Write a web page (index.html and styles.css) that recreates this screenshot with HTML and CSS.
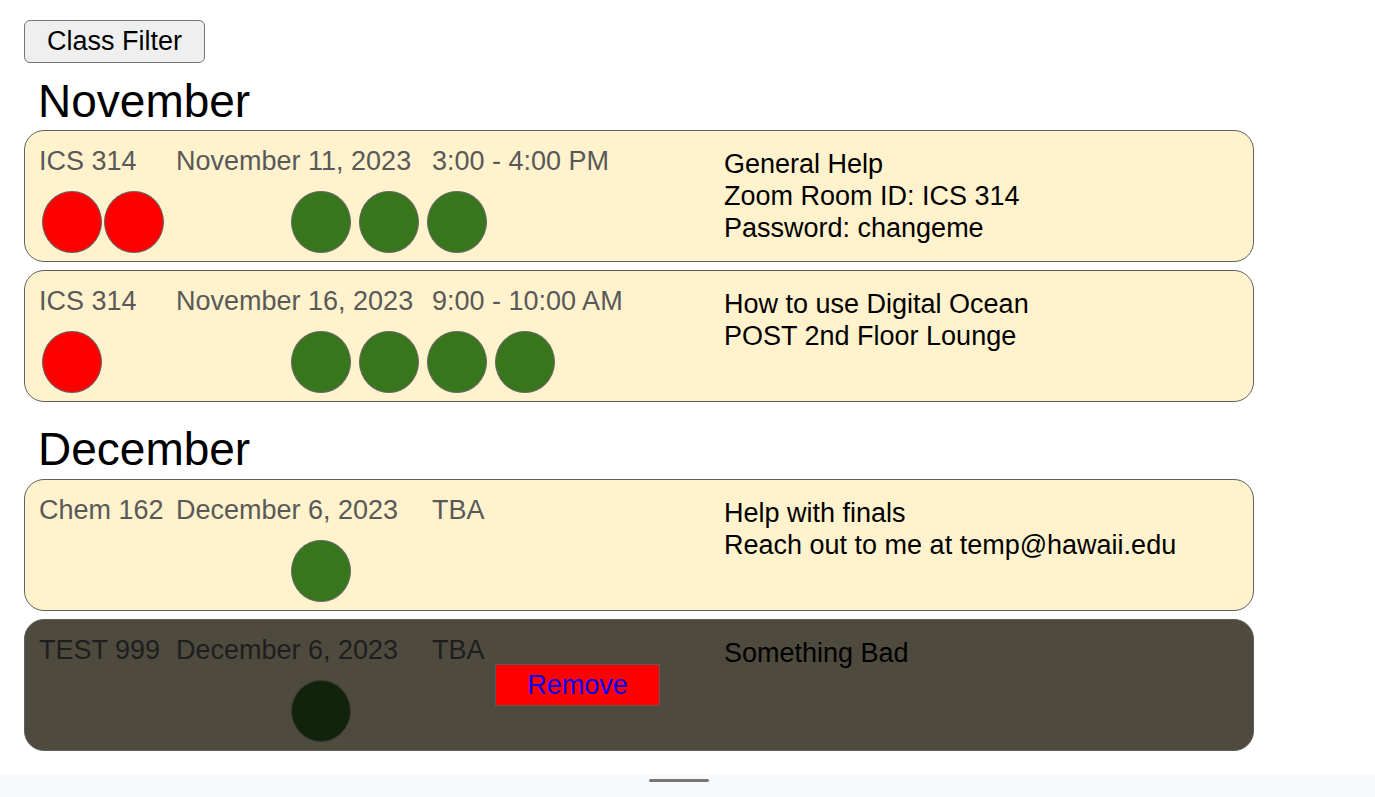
FILE: index.html
```html
<!DOCTYPE html>
<html lang="en">
<head>
<meta charset="utf-8">
<title>Office Hours</title>
<link rel="stylesheet" href="styles.css">
</head>
<body>
<main class="page">
  <button class="filter-btn" type="button">Class Filter</button>

  <section class="month">
    <h2 class="month-title">November</h2>
    <div class="card">
      <div class="course">ICS 314</div>
      <div class="date">November 11, 2023</div>
      <div class="time">3:00 - 4:00 PM</div>
      <div class="desc">General Help<br>Zoom Room ID: ICS 314<br>Password: changeme</div>
      <div class="dots">
        <div class="group red-group">
          <span class="dot red"></span><span class="dot red"></span>
        </div>
        <div class="group green-group">
          <span class="dot green"></span><span class="dot green"></span><span class="dot green"></span>
        </div>
      </div>
    </div>
    <div class="card">
      <div class="course">ICS 314</div>
      <div class="date">November 16, 2023</div>
      <div class="time">9:00 - 10:00 AM</div>
      <div class="desc">How to use Digital Ocean<br>POST 2nd Floor Lounge</div>
      <div class="dots">
        <div class="group red-group">
          <span class="dot red"></span>
        </div>
        <div class="group green-group">
          <span class="dot green"></span><span class="dot green"></span><span class="dot green"></span><span class="dot green"></span>
        </div>
      </div>
    </div>
  </section>

  <section class="month">
    <h2 class="month-title">December</h2>
    <div class="card">
      <div class="course">Chem 162</div>
      <div class="date">December 6, 2023</div>
      <div class="time">TBA</div>
      <div class="desc">Help with finals<br>Reach out to me at temp@hawaii.edu</div>
      <div class="dots">
        <div class="group red-group"></div>
        <div class="group green-group">
          <span class="dot green"></span>
        </div>
      </div>
    </div>
    <div class="card card-dim">
      <div class="course">TEST 999</div>
      <div class="date">December 6, 2023</div>
      <div class="time">TBA</div>
      <div class="desc">Something Bad</div>
      <div class="dots">
        <div class="group red-group"></div>
        <div class="group green-group">
          <span class="dot green"></span>
        </div>
        <button class="remove-btn" type="button">Remove</button>
      </div>
    </div>
  </section>
</main>
<div class="bottom-bar"><span class="handle"></span></div>
</body>
</html>
```

FILE: styles.css
```css
html, body {
  margin: 0;
  padding: 0;
  background: #ffffff;
  font-family: "Liberation Sans", Arial, sans-serif;
}

.page {
  width: 1230px;
  padding: 20px 0 0 24px;
}

.filter-btn {
  display: block;
  font-family: "Liberation Sans", Arial, sans-serif;
  font-size: 27px;
  line-height: 31px;
  color: #000;
  background: #efefef;
  border: 1px solid #767676;
  border-radius: 6px;
  padding: 5px 22px;
  margin: 0;
}

.month-title {
  margin: 12px 0 2px;
  padding-left: 14px;
  font-size: 46px;
  font-weight: normal;
  line-height: 53px;
  color: #000;
}

.month + .month .month-title {
  margin-top: 21px;
  margin-bottom: 3px;
}

.card {
  display: grid;
  grid-template-columns: 137px 256px 292px 1fr;
  grid-template-rows: auto auto;
  background: #fff2cc;
  border: 1px solid #5f5f5f;
  border-radius: 20px;
  padding: 15px 14px 8px;
  margin-bottom: 8px;
  font-size: 27px;
  line-height: 31px;
  color: #595959;
}

.course { grid-column: 1; grid-row: 1; }
.date { grid-column: 2; grid-row: 1; }
.time { grid-column: 3; grid-row: 1; }

.desc {
  grid-column: 4;
  grid-row: 1 / span 2;
  padding-top: 2px;
  line-height: 32px;
  color: #000;
}

.dots {
  grid-column: 1 / span 3;
  grid-row: 2;
  display: flex;
  align-items: flex-start;
}

.group {
  display: flex;
}

.red-group {
  flex: 0 0 249px;
  padding-left: 3px;
  gap: 2px;
}

.green-group {
  gap: 8px;
}

.dot {
  display: block;
  box-sizing: border-box;
  width: 60px;
  height: 62px;
  margin-top: 14px;
  border-radius: 50%;
  border: 1px solid #666666;
}

.dot.red { background: #ff0000; }
.dot.green { background: #38761d; }

.card-dim {
  background: #4e4a3e;
  color: #1e1e1e;
}

.card-dim .desc { color: #000; }

.card-dim .dot.green {
  background: #12230b;
  border-color: #3a3a30;
}

.remove-btn {
  box-sizing: border-box;
  width: 165px;
  height: 42px;
  margin: -2px 0 0 144px;
  padding: 0;
  background: #ff0000;
  border: 1px solid #5a5a5a;
  border-radius: 0;
  color: #0000ff;
  font-family: "Liberation Sans", Arial, sans-serif;
  font-size: 27px;
  line-height: 38px;
}

.bottom-bar {
  margin-top: 23px;
  height: 23px;
  background: #f8f9fa;
  display: flex;
  justify-content: center;
  padding-right: 17px;
  padding-top: 5px;
  box-sizing: border-box;
}

.handle {
  display: block;
  width: 60px;
  height: 3px;
  border-radius: 2px;
  background: #777777;
}
```
